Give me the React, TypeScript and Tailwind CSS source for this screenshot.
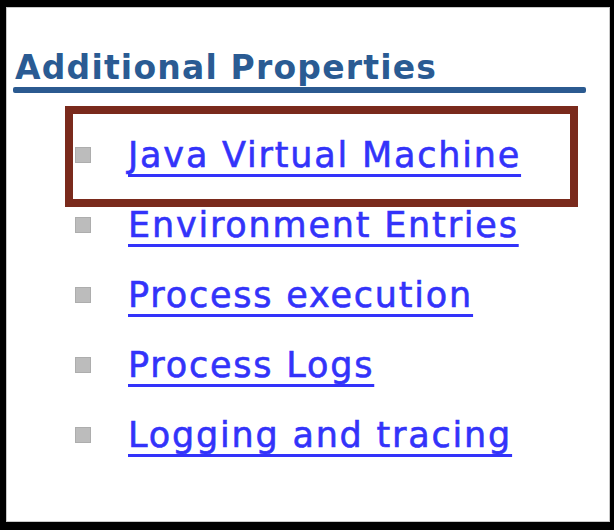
// Additional Properties panel with a highlighted first link

const links = [
  'Java Virtual Machine',
  'Environment Entries',
  'Process execution',
  'Process Logs',
  'Logging and tracing',
];

export default function App() {
  return (
    <div className="w-[614px] h-[530px] bg-black pt-[7px] pl-[6px] pr-[4px] pb-[8px] flex">
      <div
        className="relative flex-1 bg-white border border-[#c8c8c8]"
        style={{ fontFamily: '"DejaVu Sans", Verdana, sans-serif' }}
      >
        <h2 className="mt-[41px] ml-[8px] text-[33px] leading-[38px] font-bold tracking-[1.2px] text-[#2a5b93]">
          Additional Properties
        </h2>
        <div className="ml-[6px] w-[573px] h-[6px] rounded-[2px] bg-[#2b5a90]" />

        <ul className="mt-[27px]">
          {links.map((label) => (
            <li key={label} className="flex items-center h-[70px] pl-[68px]">
              <span className="w-[16px] h-[16px] bg-[#bcbcbc] border border-[#adadad] shrink-0" />
              <a
                href="#"
                className="ml-[37px] text-[35px] leading-[70px] tracking-[1.8px] text-[#3333fa] [-webkit-text-stroke:0.6px_#3333fa] underline decoration-[3px] underline-offset-[7px]"
              >
                {label}
              </a>
            </li>
          ))}
        </ul>

        {/* highlight annotation over the first link */}
        <div className="absolute left-[58px] top-[98px] w-[513px] h-[101px] border-[8px] border-[#7a2a1c] pointer-events-none" />
      </div>
    </div>
  );
}
